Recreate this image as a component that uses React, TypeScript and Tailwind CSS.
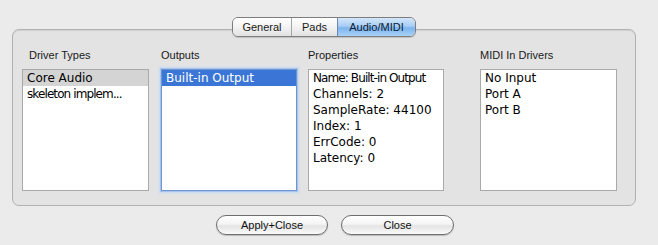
import React from "react";

const listFont = { fontFamily: '"DejaVu Sans", sans-serif' } as React.CSSProperties;
const uiFont = { fontFamily: '"Liberation Sans", Arial, sans-serif' } as React.CSSProperties;

function Label({ children, className = "" }: { children: React.ReactNode; className?: string }) {
  return (
    <div className={"h-[14px] text-[11px] leading-[14px] text-[#1a1a1a] " + className} style={uiFont}>
      {children}
    </div>
  );
}

function ListBox({
  items,
  selected,
  selectedStyle,
  width,
  focused,
}: {
  items: { text: string; cls?: string }[];
  selected?: number;
  selectedStyle?: "active" | "inactive";
  width: string;
  focused?: boolean;
}) {
  const frame = focused
    ? "border border-[#6f95cf] shadow-[0_0_0_1px_#a8c4ec,0_0_2px_2px_#c6d9f3]"
    : "border border-[#a9a9a9]";
  return (
    <div className={`${width} h-[122px] bg-white ${frame} flex flex-col`} style={listFont}>
      {items.map((it, i) => {
        const isSel = i === selected;
        const rowCls = isSel
          ? selectedStyle === "active"
            ? "bg-[#3b76d6] text-white"
            : "bg-[#d4d4d4] text-black"
          : "text-black";
        return (
          <div
            key={i}
            className={`h-[16px] leading-[16px] text-[12px] px-[4px] whitespace-nowrap overflow-hidden ${rowCls} ${it.cls ?? ""}`}
          >
            {it.text}
          </div>
        );
      })}
    </div>
  );
}

export default function App() {
  return (
    <div
      className="w-[658px] h-[245px] bg-[#ebebeb] flex flex-col overflow-hidden"
      style={uiFont}
    >
      {/* tabs */}
      <div className="relative z-10 mt-[17px] self-start ml-[232px] flex h-[20px] rounded-[6px] border border-[#7d7d7d] overflow-hidden shadow-[0_1px_1px_rgba(0,0,0,0.15)]">
        <div className="w-[59px] flex items-center justify-center text-[11px] text-[#1a1a1a] bg-gradient-to-b from-[#ffffff] via-[#f3f3f3] to-[#e2e2e2] border-r border-[#a5a5a5]">
          General
        </div>
        <div className="w-[46px] flex items-center justify-center text-[11px] text-[#1a1a1a] bg-gradient-to-b from-[#ffffff] via-[#f3f3f3] to-[#e2e2e2] border-r border-[#6d86b0]">
          Pads
        </div>
        <div className="w-[77px] flex items-center justify-center text-[11px] text-[#0d1b33] bg-[linear-gradient(to_bottom,#d3e7fb_0%,#a8cdf5_45%,#7db4ee_55%,#a8d2f8_100%)]">
          Audio/MIDI
        </div>
      </div>

      {/* group panel */}
      <div className="-mt-[8px] ml-[12px] w-[624px] h-[177px] rounded-[7px] border border-[#b1b1b1] bg-[#e3e3e3] shadow-[inset_0_1px_1px_rgba(0,0,0,0.08)] pl-[9px] pt-[18px] flex">
        <div className="flex flex-col gap-[7px]">
          <Label className="pl-[7px]">Driver Types</Label>
          <ListBox
            width="w-[127px]"
            items={[{ text: "Core Audio" }, { text: "skeleton implem...", cls: "tracking-[-0.9px]" }]}
            selected={0}
            selectedStyle="inactive"
          />
        </div>
        <div className="flex flex-col gap-[7px] ml-[12px]">
          <Label>Outputs</Label>
          <ListBox
            width="w-[136px]"
            focused
            items={[{ text: "Built-in Output" }]}
            selected={0}
            selectedStyle="active"
          />
        </div>
        <div className="flex flex-col gap-[7px] ml-[11px]">
          <Label>Properties</Label>
          <ListBox
            width="w-[136px]"
            items={[
              { text: "Name: Built-in Output", cls: "tracking-[-0.9px]" },
              { text: "Channels: 2" },
              { text: "SampleRate: 44100" },
              { text: "Index: 1" },
              { text: "ErrCode: 0" },
              { text: "Latency: 0" },
            ]}
          />
        </div>
        <div className="flex flex-col gap-[7px] ml-[36px]">
          <Label>MIDI In Drivers</Label>
          <ListBox
            width="w-[137px]"
            items={[{ text: "No Input" }, { text: "Port A" }, { text: "Port B" }]}
          />
        </div>
      </div>

      {/* buttons */}
      <div className="mt-[9px] ml-[216px] flex gap-[13px]">
        <button className="w-[112px] h-[20px] rounded-full border border-[#6e6e6e] bg-[linear-gradient(to_bottom,#ffffff_0%,#f4f4f4_45%,#e4e4e4_55%,#fafafa_100%)] text-[11px] text-[#111] flex items-center justify-center shadow-[0_1px_1px_rgba(0,0,0,0.2)]">
          Apply+Close
        </button>
        <button className="w-[113px] h-[20px] rounded-full border border-[#6e6e6e] bg-[linear-gradient(to_bottom,#ffffff_0%,#f4f4f4_45%,#e4e4e4_55%,#fafafa_100%)] text-[11px] text-[#111] flex items-center justify-center shadow-[0_1px_1px_rgba(0,0,0,0.2)]">
          Close
        </button>
      </div>
    </div>
  );
}
